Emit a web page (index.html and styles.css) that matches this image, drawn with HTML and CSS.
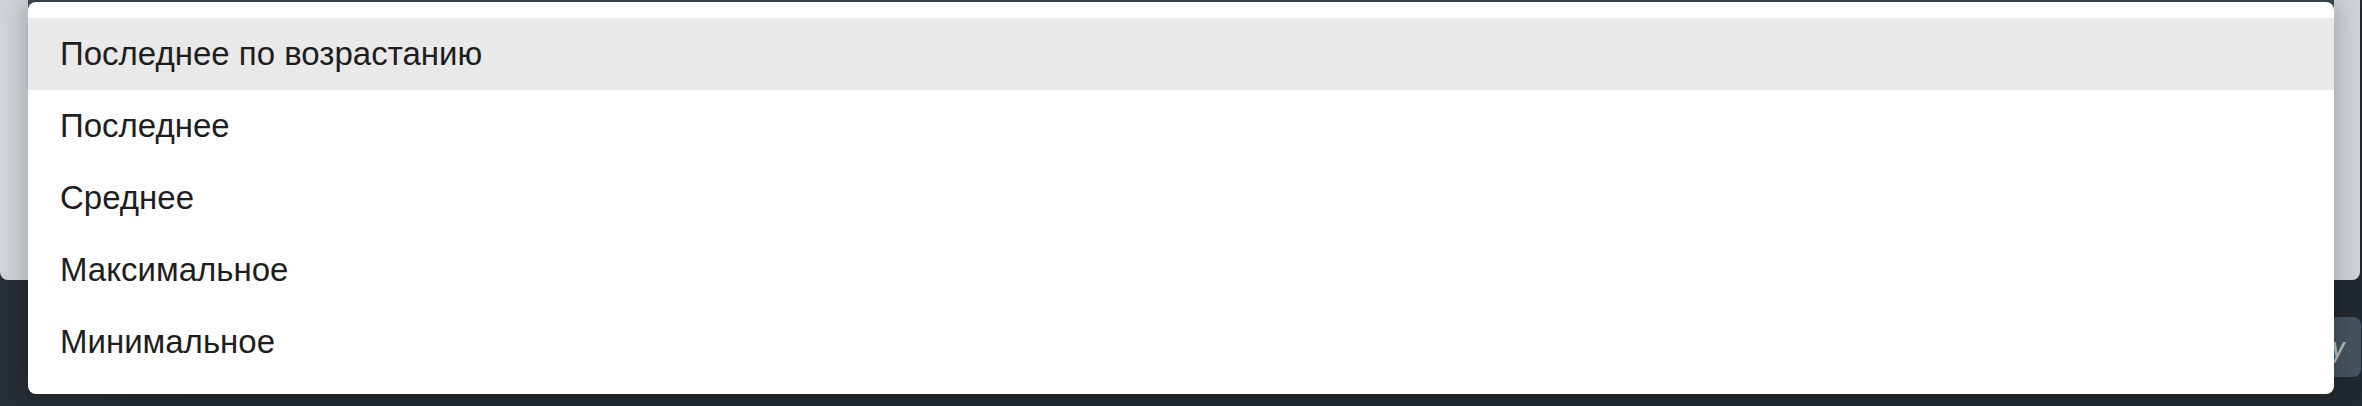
FILE: index.html
```html
<!DOCTYPE html>
<html lang="ru">
<head>
<meta charset="utf-8">
<link rel="stylesheet" href="styles.css">
</head>
<body>
<div class="page">
  <div class="card"></div>
  <div class="footer">
    <button class="btn">Apply</button>
  </div>
</div>
<div class="strip"></div>
<ul class="menu">
  <li class="item active">Последнее по возрастанию</li>
  <li class="item">Последнее</li>
  <li class="item">Среднее</li>
  <li class="item">Максимальное</li>
  <li class="item">Минимальное</li>
</ul>
</body>
</html>
```

FILE: styles.css
```css
html, body {
  margin: 0;
  padding: 0;
}
body {
  width: 2362px;
  height: 406px;
  overflow: hidden;
  background: linear-gradient(90deg, #272f35 0%, #222a30 10%, #222a30 100%);
  font-family: "Liberation Sans", Arial, sans-serif;
  position: relative;
}
.page {
  display: flex;
  flex-direction: column;
}
.card {
  width: 2360px;
  height: 280px;
  background: #cfd5d9;
  border-radius: 0 0 8px 8px;
}
.footer {
  display: flex;
  justify-content: flex-end;
  margin-top: 37px;
  padding-right: 1px;
}
.btn {
  height: 60px;
  border: none;
  border-radius: 8px;
  background: #455560;
  color: #b6bfc5;
  font-family: Roboto, "Liberation Sans", sans-serif;
  font-size: 30px;
  padding: 0 16px 0 40px;
  font-style: italic;
}
.strip {
  position: absolute;
  left: 28px;
  top: 0;
  width: 2306px;
  height: 12px;
  background: #3d4a53;
}
.menu {
  position: absolute;
  left: 28px;
  top: 2px;
  width: 2306px;
  margin: 0;
  padding: 16px 0;
  list-style: none;
  background: #ffffff;
  border-radius: 8px;
  box-shadow: 0 0 26px 4px rgba(0, 0, 0, 0.22);
  box-sizing: border-box;
}
.item {
  height: 72px;
  display: flex;
  align-items: center;
  padding-left: 32px;
  font-size: 33px;
  color: #1e1e1e;
}
.item.active {
  background: #e9e9e9;
}
```
